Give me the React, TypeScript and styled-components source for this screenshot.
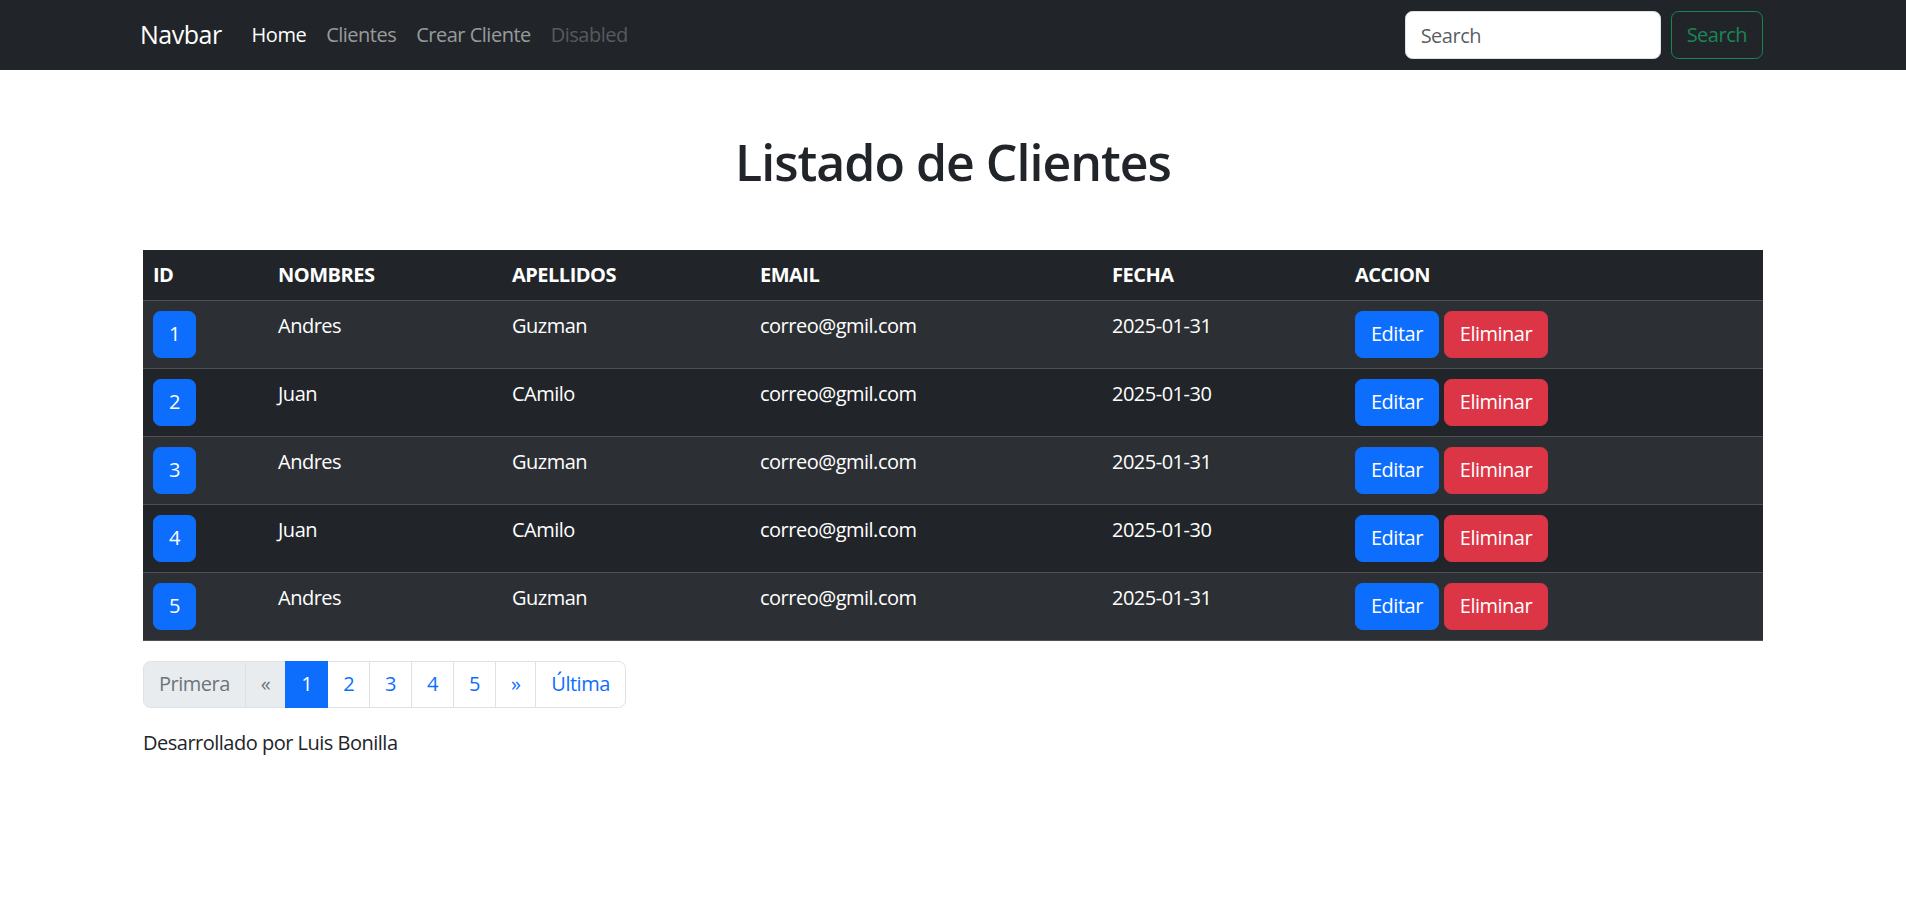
import React from 'react';
import styled, { createGlobalStyle } from 'styled-components';

const GlobalStyle = createGlobalStyle`
  body {
    margin: 0;
    font-family: 'Segoe UI', 'Open Sans', sans-serif;
    font-size: 20px;
    line-height: 1.5;
    letter-spacing: -0.025em;
    color: #212529;
    background: #fff;
  }
  *, *::before, *::after {
    box-sizing: border-box;
  }
`;

const Navbar = styled.nav`
  background-color: #212529;
  padding: 10px 0;
`;

const Container = styled.div`
  max-width: 1650px;
  margin: 0 auto;
  padding: 0 15px;
`;

const NavInner = styled(Container)`
  display: flex;
  align-items: center;
  min-height: 48.5px;
`;

const Brand = styled.a`
  color: #fff;
  font-size: 25px;
  line-height: 37.5px;
  margin-left: -3px;
  margin-right: 20px;
  text-decoration: none;
`;

const NavList = styled.ul`
  display: flex;
  list-style: none;
  margin: 0;
  padding: 0;
`;

const NavLink = styled.a<{ $state?: 'active' | 'disabled' }>`
  display: block;
  padding: 10px;
  text-decoration: none;
  color: ${({ $state }) =>
    $state === 'active'
      ? '#fff'
      : $state === 'disabled'
        ? 'rgba(255, 255, 255, 0.25)'
        : 'rgba(255, 255, 255, 0.55)'};
`;

const SearchForm = styled.form`
  display: flex;
  margin-left: auto;
`;

const SearchInput = styled.input`
  width: 256px;
  height: 47.5px;
  margin-right: 10px;
  padding: 7.5px 15px;
  font: inherit;
  letter-spacing: inherit;
  color: #212529;
  background: #fff;
  border: 1px solid #dee2e6;
  border-radius: 7.5px;

  &::placeholder {
    color: rgba(33, 37, 41, 0.75);
  }
`;

const OutlineButton = styled.button`
  padding: 7.5px 15px;
  font: inherit;
  letter-spacing: inherit;
  color: #198754;
  background: transparent;
  border: 1px solid #198754;
  border-radius: 7.5px;
`;

const Title = styled.h1`
  margin: 62px 0 57.5px;
  font-size: 50px;
  font-weight: 600;
  line-height: 1.2;
  letter-spacing: -0.02em;
  text-align: center;
`;

const Table = styled.table`
  width: 100%;
  margin-bottom: 20px;
  border-collapse: collapse;
  table-layout: fixed;
  color: #fff;
  background-color: #212529;
`;

const Th = styled.th<{ $width: number }>`
  width: ${({ $width }) => $width}px;
  padding: 10px;
  text-align: left;
  font-weight: 700;
  border-bottom: 1px solid #4d5154;
`;

const Row = styled.tr<{ $striped: boolean }>`
  background-color: ${({ $striped }) => ($striped ? '#2c3034' : '#212529')};
`;

const Td = styled.td`
  padding: 10px;
  vertical-align: top;
  border-bottom: 1px solid #4d5154;
`;

const Btn = styled.button<{ $variant: 'primary' | 'danger' }>`
  display: inline-block;
  padding: 7.5px 15px;
  font: inherit;
  letter-spacing: inherit;
  color: #fff;
  background-color: ${({ $variant }) => ($variant === 'primary' ? '#0d6efd' : '#dc3545')};
  border: 1px solid ${({ $variant }) => ($variant === 'primary' ? '#0d6efd' : '#dc3545')};
  border-radius: 7.5px;
`;

const Actions = styled.div`
  display: flex;
  gap: 5px;
`;

const Pagination = styled.ul`
  display: flex;
  list-style: none;
  margin: 0 0 20px;
  padding: 0;
`;

const PageLink = styled.a<{ $active?: boolean; $disabled?: boolean }>`
  display: block;
  padding: 7.5px 15px;
  margin-left: -1px;
  text-decoration: none;
  border: 1px solid ${({ $active }) => ($active ? '#0d6efd' : '#dee2e6')};
  color: ${({ $active, $disabled }) => ($active ? '#fff' : $disabled ? '#6c757d' : '#0d6efd')};
  background-color: ${({ $active, $disabled }) =>
    $active ? '#0d6efd' : $disabled ? '#e9ecef' : '#fff'};
  position: relative;
  z-index: ${({ $active }) => ($active ? 2 : 0)};

  li:first-child > & {
    margin-left: 0;
    border-radius: 7.5px 0 0 7.5px;
  }
  li:last-child > & {
    border-radius: 0 7.5px 7.5px 0;
  }
`;

const Footer = styled.p`
  margin: 0 0 20px;
`;

const columns = [
  { label: 'ID', width: 125 },
  { label: 'NOMBRES', width: 234 },
  { label: 'APELLIDOS', width: 248 },
  { label: 'EMAIL', width: 352 },
  { label: 'FECHA', width: 243 },
  { label: 'ACCION', width: 418 },
];

const clientes = [
  { id: 1, nombres: 'Andres', apellidos: 'Guzman', email: 'correo@gmil.com', fecha: '2025-01-31' },
  { id: 2, nombres: 'Juan', apellidos: 'CAmilo', email: 'correo@gmil.com', fecha: '2025-01-30' },
  { id: 3, nombres: 'Andres', apellidos: 'Guzman', email: 'correo@gmil.com', fecha: '2025-01-31' },
  { id: 4, nombres: 'Juan', apellidos: 'CAmilo', email: 'correo@gmil.com', fecha: '2025-01-30' },
  { id: 5, nombres: 'Andres', apellidos: 'Guzman', email: 'correo@gmil.com', fecha: '2025-01-31' },
];

const pages = [
  { label: 'Primera', disabled: true },
  { label: '«', disabled: true },
  { label: '1', active: true },
  { label: '2' },
  { label: '3' },
  { label: '4' },
  { label: '5' },
  { label: '»' },
  { label: 'Última' },
];

const App = (): React.ReactElement => (
  <>
    <GlobalStyle />
    <Navbar>
      <NavInner>
        <Brand href="#">Navbar</Brand>
        <NavList>
          <li>
            <NavLink href="#" $state="active">Home</NavLink>
          </li>
          <li>
            <NavLink href="#">Clientes</NavLink>
          </li>
          <li>
            <NavLink href="#">Crear Cliente</NavLink>
          </li>
          <li>
            <NavLink $state="disabled">Disabled</NavLink>
          </li>
        </NavList>
        <SearchForm onSubmit={(e) => e.preventDefault()}>
          <SearchInput type="search" placeholder="Search" />
          <OutlineButton type="submit">Search</OutlineButton>
        </SearchForm>
      </NavInner>
    </Navbar>

    <Container>
      <Title>Listado de Clientes</Title>
      <Table>
        <thead>
          <tr>
            {columns.map((c) => (
              <Th key={c.label} $width={c.width}>
                {c.label}
              </Th>
            ))}
          </tr>
        </thead>
        <tbody>
          {clientes.map((c, i) => (
            <Row key={c.id} $striped={i % 2 === 0}>
              <Td>
                <Btn $variant="primary">{c.id}</Btn>
              </Td>
              <Td>{c.nombres}</Td>
              <Td>{c.apellidos}</Td>
              <Td>{c.email}</Td>
              <Td>{c.fecha}</Td>
              <Td>
                <Actions>
                  <Btn $variant="primary">Editar</Btn>
                  <Btn $variant="danger">Eliminar</Btn>
                </Actions>
              </Td>
            </Row>
          ))}
        </tbody>
      </Table>

      <Pagination>
        {pages.map((p) => (
          <li key={p.label}>
            <PageLink href="#" $active={p.active} $disabled={p.disabled}>
              {p.label}
            </PageLink>
          </li>
        ))}
      </Pagination>

      <Footer>Desarrollado por Luis Bonilla</Footer>
    </Container>
  </>
);

export default App;
